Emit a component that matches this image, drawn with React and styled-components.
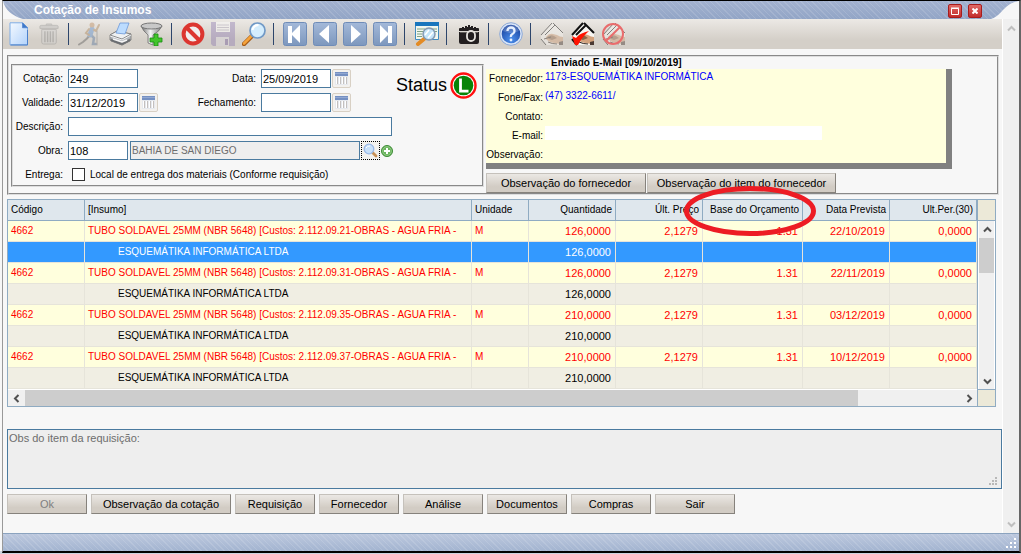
import React from 'react'
import styled, { createGlobalStyle, css } from 'styled-components'

const colors = {
  line: '#8fabc2',
  field: '#4a7a9f',
  face: '#f7f7f7',
  track: '#f0f0f0',
  cream: '#ece9d8',
  yellow: '#ffffdd',
  navy: '#2d456b',
}

const GlobalStyle = createGlobalStyle`
  *, *::before, *::after {
    box-sizing: border-box;
  }
  body {
    margin: 0;
    background: #ffffff;
    font-family: 'Liberation Sans', Arial, sans-serif;
    font-size: 10px;
    line-height: 12px;
    color: #000000;
  }
  button, input, textarea {
    font-family: inherit;
    font-size: inherit;
    margin: 0;
  }
`

const stripes = css`
  background-image: repeating-linear-gradient(
      45deg,
      rgba(255, 255, 255, 0.12) 0 1px,
      transparent 1px 4px
    ),
    linear-gradient(${p => p.$from}, ${p => p.$to});
`

const Page = styled.div`
  display: flex;
  min-height: 100vh;
  padding: 0 0 1px 2px;
  background: linear-gradient(to top, #ccd3df 3px, #f7f7f7 3px);
`

const Window = styled.div`
  flex: 1;
  min-width: 0;
  display: flex;
  flex-direction: column;
  background: ${colors.face};
  border-top: 1px solid #000000;
  border-left: 1px solid #999999;
  border-right: 2px solid #666666;
  border-bottom: 2px solid #000000;
`

const TitleBar = styled.header`
  display: flex;
  align-items: center;
  height: 18px;
  background-color: #9cacca;
  ${stripes}
`

const Title = styled.h1`
  flex: 1;
  margin: 0;
  padding-left: 11px;
  font-size: 12px;
  line-height: 20px;
  color: #ffffff;
`

const WindowButton = styled.button`
  display: flex;
  align-items: center;
  justify-content: center;
  width: 14px;
  height: 14px;
  margin: 2px 6px 0 0;
  padding: 0;
  border: 1px solid #a81c1c;
  border-radius: 2px;
  background: linear-gradient(#e06a66, #c22c2c);
`

const Body = styled.div`
  flex: 1;
  display: flex;
`

const Content = styled.main`
  flex: 1;
  min-width: 0;
  border-right: 1px solid #ffffff;
`

const Toolbar = styled.nav`
  display: flex;
  align-items: center;
  height: 30px;
  padding-left: 1px;
  background: linear-gradient(#ece9e5, #d4cfc8 70%);
`

const ToolButton = styled.button`
  display: flex;
  align-items: center;
  justify-content: center;
  width: ${p => (p.$wide ? 31 : 30)}px;
  height: 30px;
  padding: 0;
  border: 0;
  background: none;
  opacity: ${p => (p.disabled ? 0.4 : 1)};
`

const Separator = styled.span`
  width: 1px;
  height: 22px;
  margin: 0 6px 0 4px;
  background: ${colors.navy};
`

const Panel = styled.section`
  display: flex;
  align-items: flex-start;
  margin: 6px 3px 0 4px;
  padding-left: 2px;
  border: 2px groove #dddddd;
`

const QuoteBox = styled.div`
  display: flex;
  gap: 3px;
  width: 473px;
  height: 123px;
  margin-top: 7px;
  border: 2px groove #dddddd;
  padding-top: 3px;
`

const QuoteForm = styled.form`
  display: grid;
  grid-template-columns: 50px 90px 93px 132px;
  grid-auto-rows: 19px;
  gap: 5px;
`

const Label = styled.label`
  line-height: 19px;
  text-align: right;
  white-space: nowrap;
`

const Field = styled.div`
  display: flex;
  align-items: center;
  gap: 1px;
  grid-column: ${p => (p.$full ? '2 / 5' : 'auto')};
`

const TextInput = styled.input`
  width: ${p => p.$width || '70px'};
  height: 19px;
  padding: 0 1px;
  border: 1px solid ${colors.field};
  border-radius: 0;
  background: #ffffff;
  font-size: ${p => (p.disabled ? 10 : 11)}px;
  color: #000000;
  &:disabled {
    flex: 1;
    min-width: 0;
    margin-left: 1px;
    background: #eeeeee;
    color: #6d6d6d;
  }
`

const SmallButton = styled.button`
  display: flex;
  align-items: center;
  justify-content: center;
  width: ${p => (p.$bare ? 12 : 19)}px;
  height: 19px;
  padding: 0;
  border: ${p => (p.$bare ? '0' : p.$dotted ? '1px dotted #000000' : '1px solid #d8d0c4')};
  border-radius: ${p => (p.$dotted ? 0 : 2)}px;
  background: ${p => (p.$bare ? 'none' : '#f3f1ee')};
`

const Check = styled.input`
  appearance: none;
  width: 13px;
  height: 13px;
  margin: 0 4px;
  border: 1px solid #333333;
  background: #ffffff;
`

const Status = styled.div`
  display: flex;
  align-items: center;
  gap: 3px;
  height: 32px;
  font-size: 18px;
`

const SupplierBox = styled.div`
  width: 466px;
  margin-left: 2px;
`

const SupplierTitle = styled.h2`
  margin: 0;
  padding-left: 65px;
  font-size: 10px;
  line-height: 12px;
`

const SupplierCard = styled.div`
  display: grid;
  grid-template-columns: 57px 1fr;
  grid-auto-rows: 19px;
  column-gap: 2px;
  height: 100px;
  border: solid #808080;
  border-width: 0 6px 6px 0;
  background: ${colors.yellow};
`

const SupplierValue = styled.div`
  line-height: 16px;
  color: #0000ff;
`

const MailInput = styled.input`
  display: block;
  width: 277px;
  height: 14px;
  border: 0;
  padding: 0;
  background: #ffffff;
`

const ButtonRow = styled.div`
  display: flex;
  gap: ${p => p.$gap}px;
  margin-top: ${p => p.$top}px;
  padding-left: ${p => p.$left || 0}px;
`

const PushButton = styled.button`
  width: ${p => p.$width || 80}px;
  height: 20px;
  flex-shrink: 0;
  padding: 0;
  border: 1px solid;
  border-color: #c5c1bb #86827c #86827c #c5c1bb;
  background: linear-gradient(#ebe8e4, #d2ccc4 70%);
  font-size: 11px;
  color: #000000;
  white-space: nowrap;
  &:disabled {
    color: #808080;
  }
`

const GridFrame = styled.section`
  display: grid;
  grid-template-columns: 1fr 18px;
  margin: 4px 6px 0 4px;
  border: 1px solid ${colors.line};
`

const Table = styled.table`
  width: 100%;
  table-layout: fixed;
  border-collapse: separate;
  border-spacing: 0;
`

const HeadCell = styled.th`
  position: relative;
  height: 21px;
  padding: 0 3px;
  border-right: 1px solid ${colors.line};
  border-bottom: 1px solid ${colors.line};
  background: #dfe7ed;
  font-weight: normal;
  text-align: ${p => (p.$right ? 'right' : 'left')};
  white-space: nowrap;
`

const Cell = styled.td`
  height: 21px;
  padding: 0 4px 0 ${p => (p.$indent ? 33 : 3)}px;
  border-right: 1px solid #e6e4da;
  border-bottom: 1px solid #e6e4da;
  font-size: ${p => (p.$right ? 11 : 10)}px;
  text-align: ${p => (p.$right ? 'right' : 'left')};
  white-space: nowrap;
  overflow: hidden;
`

const Row = styled.tr`
  background: ${p => (p.$selected ? '#3399ff' : p.$item ? colors.yellow : '#f0eee3')};
  color: ${p => (p.$selected ? '#ffffff' : p.$item ? '#ff0000' : '#000000')};
`

const Highlight = styled.svg`
  position: absolute;
  top: -14px;
  left: -19px;
  z-index: 1;
  pointer-events: none;
`

const SideBar = styled.div`
  display: flex;
  flex-direction: column;
  border-left: 1px solid ${colors.line};
`

const Corner = styled.div`
  height: ${p => (p.$head ? '21px' : 'auto')};
  background: ${colors.cream};
  border: 0 solid ${colors.line};
  border-width: ${p => (p.$head ? '0 0 1px' : '1px 0 0 1px')};
`

const ScrollTrack = styled.div`
  display: flex;
  flex: 1;
  flex-direction: ${p => (p.$horizontal ? 'row' : 'column')};
  justify-content: space-between;
  border: 0 solid #ffffff;
  border-width: ${p => (p.$horizontal ? '1px 0 0' : '0 1px')};
  background: ${colors.track};
`

const ScrollButton = styled.button`
  display: flex;
  align-items: center;
  justify-content: center;
  width: ${p => (p.$page ? 'auto' : '16px')};
  height: ${p => (p.$page ? '18px' : '16px')};
  padding: 0;
  border: 0;
  background: none;
  color: ${p => (p.$page ? '#bfbfbf' : '#505050')};
`

const Thumb = styled.div`
  ${p =>
    p.$horizontal
      ? css`
          flex: 0 0 86%;
          margin-right: auto;
          margin-left: 1px;
        `
      : css`
          height: 35px;
          margin-bottom: auto;
          margin-top: 1px;
        `}
  background: #cdcdcd;
`

const PageScroll = styled.aside`
  display: flex;
  flex-direction: column;
  justify-content: space-between;
  width: 16px;
  background: ${colors.track};
`

const NotesWrap = styled.div`
  position: relative;
  margin: 22px 0 0 4px;
`

const Notes = styled.textarea`
  display: block;
  width: 100%;
  height: 60px;
  padding: 1px;
  border: 1px solid ${colors.field};
  border-radius: 0;
  background: #eeeeee;
  color: #6d6d6d;
  font-size: 11px;
  line-height: 14px;
  resize: none;
`

const NotesGrip = styled.span`
  position: absolute;
  right: 4px;
  bottom: 3px;
  line-height: 0;
`

const StatusBar = styled.footer`
  display: flex;
  justify-content: flex-end;
  align-items: flex-end;
  height: 18px;
  padding: 0 1px 1px 0;
  border-top: 1px solid #8ba3bf;
  ${stripes}
`

// icons

const NewIcon = () => (
  <svg width="20" height="24" viewBox="0 0 20 24">
    <defs>
      <linearGradient id="sheet" x1="0" y1="0" x2="1" y2="1">
        <stop offset="0" stopColor="#f4f9ff" />
        <stop offset="1" stopColor="#b3d3fb" />
      </linearGradient>
    </defs>
    <path d="M1 .8h12.500l5 5v17H1z" fill="url(#sheet)" stroke="#7fadE6" />
    <path d="M13.500.8v5h5z" fill="#3f79c9" stroke="#3f79c9" strokeWidth=".6" />
    <path d="M1.500 23h17V8" fill="none" stroke="#4a80cc" />
  </svg>
)

const TrashIcon = () => (
  <svg width="20" height="24" viewBox="0 0 22 24" fill="none" stroke="#888888">
    <path d="M8 2.500V1h6v1.500M1 6V3.500Q1 2.500 3 2.500h16q2 0 2 1V6z" fill="#b4b4b4" />
    <path d="M3 7h16v14q0 2-2 2H5q-2 0-2-2z" fill="#d0d0d0" />
    <path d="M6.500 9v12M9.500 9v12M12.500 9v12M15.500 9v12" stroke="#808080" strokeWidth="1.600" />
  </svg>
)

const RunnerIcon = () => (
  <svg width="24" height="24" viewBox="0 0 24 24" fill="none" strokeLinecap="round">
    <path d="M1 22.500 5 20 9 16.500 12 13" stroke="#555555" strokeWidth="2" />
    <path d="m12 12 4 4-1 6h3" stroke="#50709a" strokeWidth="2.500" />
    <path d="m14 7-2 6" stroke="#4f86cc" strokeWidth="5" />
    <path d="m11 7-3 4 3 2M16 8l2 1 3-6" stroke="#a77b48" strokeWidth="2" />
    <circle cx="14" cy="3" r="2.500" fill="#b78352" />
    <path d="M19 9v14" stroke="#777777" strokeWidth="1" />
  </svg>
)

const PrinterIcon = () => (
  <svg width="23" height="24" viewBox="0 0 23 24" stroke="#777777" strokeWidth=".8">
    <path d="m1 13 7-4 14 3v6l-9 5-12-5z" fill="#b2b6bb" />
    <path d="m1 13 7-4 14 3-9 5z" fill="#eef0f2" />
    <path d="m7 11 4-10h9l-4 11z" fill="#bcdcff" stroke="#6c98d8" />
    <path d="m1 14 12 4 9-5" fill="none" stroke="#ffffff" />
    <path d="m2 17 11 4 8-4v2l-8 4-11-4z" fill="#666a70" />
    <path d="m4 17 9 3 5-2" fill="none" stroke="#f5f5f5" strokeWidth="1.500" />
  </svg>
)

const FilterIcon = () => (
  <svg width="23" height="24" viewBox="0 0 23 24">
    <defs>
      <linearGradient id="metal">
        <stop offset="0" stopColor="#666666" />
        <stop offset=".45" stopColor="#f5f5f5" />
        <stop offset="1" stopColor="#777777" />
      </linearGradient>
    </defs>
    <path d="M1 4q2 5 7 9v8l5 2V13q7-4 9-9z" fill="url(#metal)" stroke="#666666" strokeWidth=".7" />
    <ellipse cx="11.500" cy="4" rx="10.500" ry="3" fill="#c8c8c8" stroke="#777777" />
    <path d="M14 12h4v4h4v4h-4v4h-4v-4h-4v-4h4z" fill="#43c52b" stroke="#178b12" strokeWidth=".8" />
  </svg>
)

const StopIcon = () => (
  <svg width="24" height="24" viewBox="0 0 24 24" fill="none" stroke="#dc3630" strokeWidth="4">
    <circle cx="12" cy="12" r="9.400" fill="#f1eeee" />
    <path d="m5.500 5.500 13 13" />
  </svg>
)

const SaveIcon = () => (
  <svg width="24" height="24" viewBox="0 0 24 24">
    <path d="M0 0h24v24H2l-2-2z" fill="#8a76b0" />
    <path d="M5 0h14v10H5z" fill="#ffffff" />
    <path d="M6 3h12M6 5.500h12M6 8h12" stroke="#a7a0b5" />
    <path d="M5 15h13v9H5z" fill="#d9d5e0" />
    <path d="M14 17h3v6h-3z" fill="#6a5294" />
  </svg>
)

const LensIcon = () => (
  <svg width="24" height="24" viewBox="0 0 24 24">
    <path d="m2 22 8-8" stroke="#a55b17" strokeWidth="4.500" strokeLinecap="round" />
    <path d="m2 21.500 8-8" stroke="#f6a33b" strokeWidth="2.500" strokeLinecap="round" />
    <circle cx="15.500" cy="8.500" r="7.500" fill="#d4edfd" stroke="#7199c6" strokeWidth="1.700" />
    <path d="M10.500 8q1-5 6-5" fill="none" stroke="#ffffff" strokeWidth="2" />
  </svg>
)

const navPaths = {
  first: 'M5 4h4v7l8-8v18l-8-8v8H5z',
  prev: 'M16 3v18L6 12z',
  next: 'M8 3v18l10-9z',
  last: 'M19 4h-4v7L7 3v18l8-8v8h4z',
}

const NavIcon = ({ kind }) => (
  <svg width="24" height="24" viewBox="0 0 24 24">
    <defs>
      <linearGradient id="nav" x1="0" y1="0" x2="0" y2="1">
        <stop offset="0" stopColor="#a4b9d9" />
        <stop offset="1" stopColor="#7d97bd" />
      </linearGradient>
    </defs>
    <rect x=".5" y=".5" width="23" height="23" rx="2" fill="url(#nav)" stroke="#6f8cb8" />
    <path d={navPaths[kind]} fill="#ffffff" />
  </svg>
)

const BrowseIcon = () => (
  <svg width="24" height="24" viewBox="0 0 24 24">
    <path d="M.5.500h23v17H.5z" fill="#f2f7ef" stroke="#408bc0" />
    <path d="M0 0h24v4H0z" fill="#1976bd" />
    <path d="M2 7h8M12 7h10M2 9.500h7M2 12h5M2 14.500h5M19 9.500h3" stroke="#7fa285" />
    <path d="m3 22 6-5" stroke="#e38b24" strokeWidth="4" strokeLinecap="round" />
    <circle cx="14" cy="12" r="6" fill="#bfe2fa" fillOpacity=".9" stroke="#8499b2" strokeWidth="1.500" />
    <path d="m10 13 4-5M13 16l5-6" stroke="#ffffff" strokeWidth="1.500" />
  </svg>
)

const CameraIcon = () => (
  <svg width="20" height="19" viewBox="0 0 20 19">
    <path
      d="M1 3h2V2h2v1h1V1h2v1h1V0h2v2h1V1h2v2h1V2h2v1h2q1 0 1 1v2H0V4q0-1 1-1zM0 7h20v10q0 2-2 2H2q-2 0-2-2z"
      fill="#231f20"
    />
    <rect x="8" y="6" width="8" height="10" rx="4" fill="#231f20" stroke="#e5e2dd" strokeWidth="1.800" />
    <path d="M1 7h7M16 7h3" stroke="#d9d5ce" strokeWidth=".7" />
  </svg>
)

const HelpIcon = () => (
  <svg width="24" height="24" viewBox="0 0 24 24">
    <defs>
      <radialGradient id="help" cx=".5" cy=".8" r=".8">
        <stop offset="0" stopColor="#4c91ee" />
        <stop offset="1" stopColor="#173f9b" />
      </radialGradient>
    </defs>
    <circle cx="12" cy="12" r="11.300" fill="#d9e5f7" stroke="#8ca8d6" />
    <circle cx="12" cy="12" r="9.300" fill="url(#help)" />
    <path d="M4 9q2-6 8-6t8 6q-8 4-16 0z" fill="#ffffff" opacity=".2" />
    <path
      d="M8.500 9q0-3.500 3.500-3.500T15.500 9q0 2-2 3T12 15"
      fill="none"
      stroke="#e6f0ff"
      strokeWidth="2.300"
    />
    <circle cx="12" cy="18" r="1.400" fill="#e6f0ff" />
  </svg>
)

const HandIcon = ({ mark }) => (
  <svg width="24" height="24" viewBox="0 0 24 24">
    <g opacity={mark === 'check' ? 1 : 0.45}>
      <path d="M1 14 13 1l10 10v12H6L1 18z" fill="#f8f6f2" />
      <path
        d="M1 13 12 1M5 13 15 3M13 1l10 10M1 17l5 6"
        fill="none"
        stroke="#111111"
        strokeWidth={mark === 'check' ? 2 : 1}
      />
      <path d="M6 15q3-4 7-3l4 1q3 2 6 2v7q-5 0-8-1-5 0-9-4z" fill="#d3a27c" />
      <path d="M7 15q4-3 7-1l3 2-5 2q-3 0-5-3z" fill="#8d6244" />
      <path d="m19 20 4-1v4h-4z" fill="#4b3a33" />
      <path d="m4 17 7-2M8 20q4 2 9 2" fill="none" stroke="#33261e" />
    </g>
    {mark === 'check' && (
      <path d="m1 14 4 2q4-5 13-7Q11 15 7 23L4 23z" fill="#ff1200" />
    )}
    {mark === 'block' && (
      <g fill="none" stroke="#e96c6c" strokeWidth="2">
        <circle cx="11" cy="12" r="10" />
        <path d="M18 5 4 19" />
      </g>
    )}
  </svg>
)

const CalendarIcon = () => (
  <svg width="15" height="15" viewBox="0 0 15 15">
    <path d="M1 1h13v13H1z" fill="#e6e9ee" />
    <path d="M1 1h13v4H1z" fill="#7590c2" />
    <path d="M1 2.500h13" stroke="#92a8d2" />
    <path d="M3.500 6v7M6.500 6v7M9.500 6v7M12.500 6v7" stroke="#c4c0be" />
    <path d="M2.500 6v7M5.500 6v7M8.500 6v7M11.500 6v7" stroke="#ffffff" />
  </svg>
)

const FindIcon = () => (
  <svg width="15" height="15" viewBox="0 0 15 15">
    <path d="m9 9 4 4" stroke="#c89157" strokeWidth="2.800" strokeLinecap="round" />
    <circle cx="6" cy="6" r="4.800" fill="#c8e1fb" stroke="#9ab8e6" strokeWidth="1.300" />
    <path d="M3 5q1-2 4-2" fill="none" stroke="#ffffff" />
  </svg>
)

const AddIcon = () => (
  <svg width="12" height="12" viewBox="0 0 12 12">
    <circle cx="6" cy="6" r="5.500" fill="#69b35c" stroke="#3e8b37" />
    <circle cx="6" cy="6" r="4.300" fill="none" stroke="#a0d595" strokeWidth=".7" />
    <path d="M6 3v6M3 6h6" stroke="#ffffff" strokeWidth="2" />
  </svg>
)

const StatusIcon = () => (
  <svg width="27" height="27" viewBox="0 0 27 27" role="img" aria-label="Liberado">
    <circle cx="13.500" cy="13.500" r="12" fill="#ffffff" stroke="#ff0f0f" strokeWidth="2.400" />
    <circle cx="13.500" cy="13.500" r="9.800" fill="#078307" />
    <path d="M10.500 6.500v12.700h8" fill="none" stroke="#ffffff" strokeWidth="2.800" />
  </svg>
)

const arrowTurn = { up: 0, right: 90, down: 180, left: 270 }

const Arrow = ({ to }) => (
  <svg width="9" height="9" viewBox="0 0 9 9">
    <path
      d="m1 6.500 3.500-3.500L8 6.500"
      fill="none"
      stroke="currentColor"
      strokeWidth="2"
      transform={`rotate(${arrowTurn[to]} 4.500 4.500)`}
    />
  </svg>
)

const Grip = ({ step, color }) => (
  <svg width={step * 3} height={step * 3} fill={color}>
    {[[2, 0], [1, 1], [2, 1], [0, 2], [1, 2], [2, 2]].map(([x, y]) => (
      <rect key={`${x}${y}`} x={x * step} y={y * step} width="2" height="2" />
    ))}
  </svg>
)

const tools = [
  { name: 'Novo', icon: <NewIcon /> },
  { name: 'Excluir', icon: <TrashIcon />, disabled: true },
  null,
  { name: 'Executar', icon: <RunnerIcon />, disabled: true },
  { name: 'Imprimir', icon: <PrinterIcon />, wide: true },
  { name: 'Filtrar', icon: <FilterIcon />, wide: true },
  null,
  { name: 'Cancelar', icon: <StopIcon /> },
  { name: 'Salvar', icon: <SaveIcon />, disabled: true },
  { name: 'Pesquisar', icon: <LensIcon />, wide: true },
  null,
  { name: 'Primeiro', icon: <NavIcon kind="first" /> },
  { name: 'Anterior', icon: <NavIcon kind="prev" /> },
  { name: 'Próximo', icon: <NavIcon kind="next" /> },
  { name: 'Último', icon: <NavIcon kind="last" /> },
  null,
  { name: 'Consultar', icon: <BrowseIcon />, wide: true },
  null,
  { name: 'Foto', icon: <CameraIcon />, wide: true },
  null,
  { name: 'Ajuda', icon: <HelpIcon />, wide: true },
  null,
  { name: 'Assinar', icon: <HandIcon /> },
  { name: 'Aprovar', icon: <HandIcon mark="check" />, wide: true },
  { name: 'Reprovar', icon: <HandIcon mark="block" />, wide: true },
]

const columns = [
  { title: 'Código', width: 77 },
  { title: '[Insumo]' },
  { title: 'Unidade', width: 57 },
  { title: 'Quantidade', width: 87, right: true },
  { title: 'Últ. Preço', width: 87, right: true },
  { title: 'Base do Orçamento', width: 100, right: true, marked: true },
  { title: 'Data Prevista', width: 87, right: true },
  { title: 'Ult.Per.(30)', width: 87, right: true },
]

const items = [
  { cost: '2.112.09.21', amount: '126,0000', date: '22/10/2019', selected: true },
  { cost: '2.112.09.31', amount: '126,0000', date: '22/11/2019' },
  { cost: '2.112.09.35', amount: '210,0000', date: '03/12/2019' },
  { cost: '2.112.09.37', amount: '210,0000', date: '10/12/2019' },
]

const actions = [
  { text: 'Ok', disabled: true },
  { text: 'Observação da cotação', width: 140 },
  { text: 'Requisição' },
  { text: 'Fornecedor' },
  { text: 'Análise' },
  { text: 'Documentos' },
  { text: 'Compras' },
  { text: 'Sair' },
]

const DateField = ({ id, value }) => (
  <Field>
    <TextInput id={id} defaultValue={value} />
    <SmallButton type="button" aria-label="Calendário">
      <CalendarIcon />
    </SmallButton>
  </Field>
)

const Quote = () => (
  <QuoteBox>
    <QuoteForm>
      <Label htmlFor="cotacao">Cotação:</Label>
      <Field>
        <TextInput id="cotacao" defaultValue="249" />
      </Field>
      <Label htmlFor="data">Data:</Label>
      <DateField id="data" value="25/09/2019" />
      <Label htmlFor="validade">Validade:</Label>
      <DateField id="validade" value="31/12/2019" />
      <Label htmlFor="fechamento">Fechamento:</Label>
      <DateField id="fechamento" value="" />
      <Label htmlFor="descricao">Descrição:</Label>
      <Field $full>
        <TextInput id="descricao" $width="324px" />
      </Field>
      <Label htmlFor="obra">Obra:</Label>
      <Field $full>
        <TextInput id="obra" $width="60px" defaultValue="108" />
        <TextInput aria-label="Nome da obra" defaultValue="BAHIA DE SAN DIEGO" disabled />
        <SmallButton type="button" aria-label="Buscar obra" $dotted>
          <FindIcon />
        </SmallButton>
        <SmallButton type="button" aria-label="Adicionar obra" $bare>
          <AddIcon />
        </SmallButton>
      </Field>
      <Label as="span">Entrega:</Label>
      <Field $full>
        <Check type="checkbox" id="entrega" />
        <Label htmlFor="entrega">Local de entrega dos materiais (Conforme requisição)</Label>
      </Field>
    </QuoteForm>
    <Status>
      Status
      <StatusIcon />
    </Status>
  </QuoteBox>
)

const Supplier = () => (
  <SupplierBox>
    <SupplierTitle>Enviado E-Mail [09/10/2019]</SupplierTitle>
    <SupplierCard>
      <Label as="span">Fornecedor:</Label>
      <SupplierValue>1173-ESQUEMÁTIKA INFORMÁTICA</SupplierValue>
      <Label as="span">Fone/Fax:</Label>
      <SupplierValue>(47) 3322-6611/</SupplierValue>
      <Label as="span">Contato:</Label>
      <SupplierValue />
      <Label htmlFor="email">E-mail:</Label>
      <SupplierValue>
        <MailInput id="email" />
      </SupplierValue>
      <Label as="span">Observação:</Label>
    </SupplierCard>
    <ButtonRow $gap={1} $top={4}>
      <PushButton $width={160}>Observação do fornecedor</PushButton>
      <PushButton $width={189}>Observação do item do fornecedor</PushButton>
    </ButtonRow>
  </SupplierBox>
)

const ItemRows = ({ item }) => (
  <>
    <Row $item>
      <Cell>4662</Cell>
      <Cell>{`TUBO SOLDAVEL 25MM (NBR 5648) [Custos: ${item.cost}-OBRAS - AGUA FRIA -`}</Cell>
      <Cell>M</Cell>
      <Cell $right>{item.amount}</Cell>
      <Cell $right>2,1279</Cell>
      <Cell $right>1.31</Cell>
      <Cell $right>{item.date}</Cell>
      <Cell $right>0,0000</Cell>
    </Row>
    <Row $selected={item.selected}>
      <Cell />
      <Cell $indent>ESQUEMÁTIKA INFORMÁTICA LTDA</Cell>
      <Cell />
      <Cell $right>{item.amount}</Cell>
      <Cell />
      <Cell />
      <Cell />
      <Cell />
    </Row>
  </>
)

const ItemGrid = () => (
  <GridFrame>
    <Table>
      <colgroup>
        {columns.map(c => (
          <col key={c.title} width={c.width} />
        ))}
      </colgroup>
      <thead>
        <tr>
          {columns.map(c => (
            <HeadCell key={c.title} $right={c.right}>
              {c.title}
              {c.marked && (
                <Highlight width="132" height="50" viewBox="0 0 132 50">
                  <ellipse cx="66" cy="25" rx="63.500" ry="22.500" fill="none" stroke="#ed1c24" strokeWidth="5" />
                </Highlight>
              )}
            </HeadCell>
          ))}
        </tr>
      </thead>
      <tbody>
        {items.map(item => (
          <ItemRows key={item.cost} item={item} />
        ))}
      </tbody>
    </Table>
    <SideBar>
      <Corner $head />
      <ScrollTrack>
        <ScrollButton aria-label="Subir"><Arrow to="up" /></ScrollButton>
        <Thumb />
        <ScrollButton aria-label="Descer"><Arrow to="down" /></ScrollButton>
      </ScrollTrack>
    </SideBar>
    <ScrollTrack $horizontal>
      <ScrollButton aria-label="Esquerda"><Arrow to="left" /></ScrollButton>
      <Thumb $horizontal />
      <ScrollButton aria-label="Direita"><Arrow to="right" /></ScrollButton>
    </ScrollTrack>
    <Corner />
  </GridFrame>
)

export default function App() {
  return (
    <Page>
      <GlobalStyle />
      <Window>
        <TitleBar $from="#a3b2d0" $to="#92a5c6">
          <svg width="20" height="18" viewBox="0 0 20 18">
            <path d="M0 0q3 13 20 18H0z" fill="#f7f7f7" />
          </svg>
          <Title>Cotação de Insumos</Title>
          <WindowButton aria-label="Maximizar">
            <svg width="8" height="8" viewBox="0 0 8 8">
              <path d="M.5 1.500h7v6h-7zM0 1h8" fill="none" stroke="#ffffff" />
            </svg>
          </WindowButton>
          <WindowButton aria-label="Fechar">
            <svg width="6" height="6" viewBox="0 0 6 6">
              <path d="m.5.500 5 5m0-5-5 5" stroke="#ffffff" strokeWidth="2" />
            </svg>
          </WindowButton>
          <svg width="31" height="18" viewBox="0 0 31 18">
            <path d="M3 18Q8 17 15 9T31 0v18z" fill="#f7f7f7" />
          </svg>
        </TitleBar>
        <Body>
          <Content>
            <Toolbar>
              {tools.map((tool, i) =>
                tool ? (
                  <ToolButton key={tool.name} aria-label={tool.name} disabled={tool.disabled} $wide={tool.wide}>
                    {tool.icon}
                  </ToolButton>
                ) : (
                  <Separator key={i} />
                )
              )}
            </Toolbar>
            <Panel>
              <Quote />
              <Supplier />
            </Panel>
            <ItemGrid />
            <NotesWrap>
              <Notes aria-label="Observação do item" defaultValue="Obs do item da requisição:" readOnly />
              <NotesGrip>
                <Grip step={3} color="#b8b8b8" />
              </NotesGrip>
            </NotesWrap>
            <ButtonRow $gap={4} $top={5} $left={4}>
              {actions.map(a => (
                <PushButton key={a.text} $width={a.width} disabled={a.disabled}>
                  {a.text}
                </PushButton>
              ))}
            </ButtonRow>
          </Content>
          <PageScroll>
            <ScrollButton aria-label="Subir página" $page><Arrow to="up" /></ScrollButton>
            <ScrollButton aria-label="Descer página" $page><Arrow to="down" /></ScrollButton>
          </PageScroll>
        </Body>
        <StatusBar $from="#bcc8de" $to="#a3b4d0">
          <Grip step={4} color="#ffffff" />
        </StatusBar>
      </Window>
    </Page>
  )
}
